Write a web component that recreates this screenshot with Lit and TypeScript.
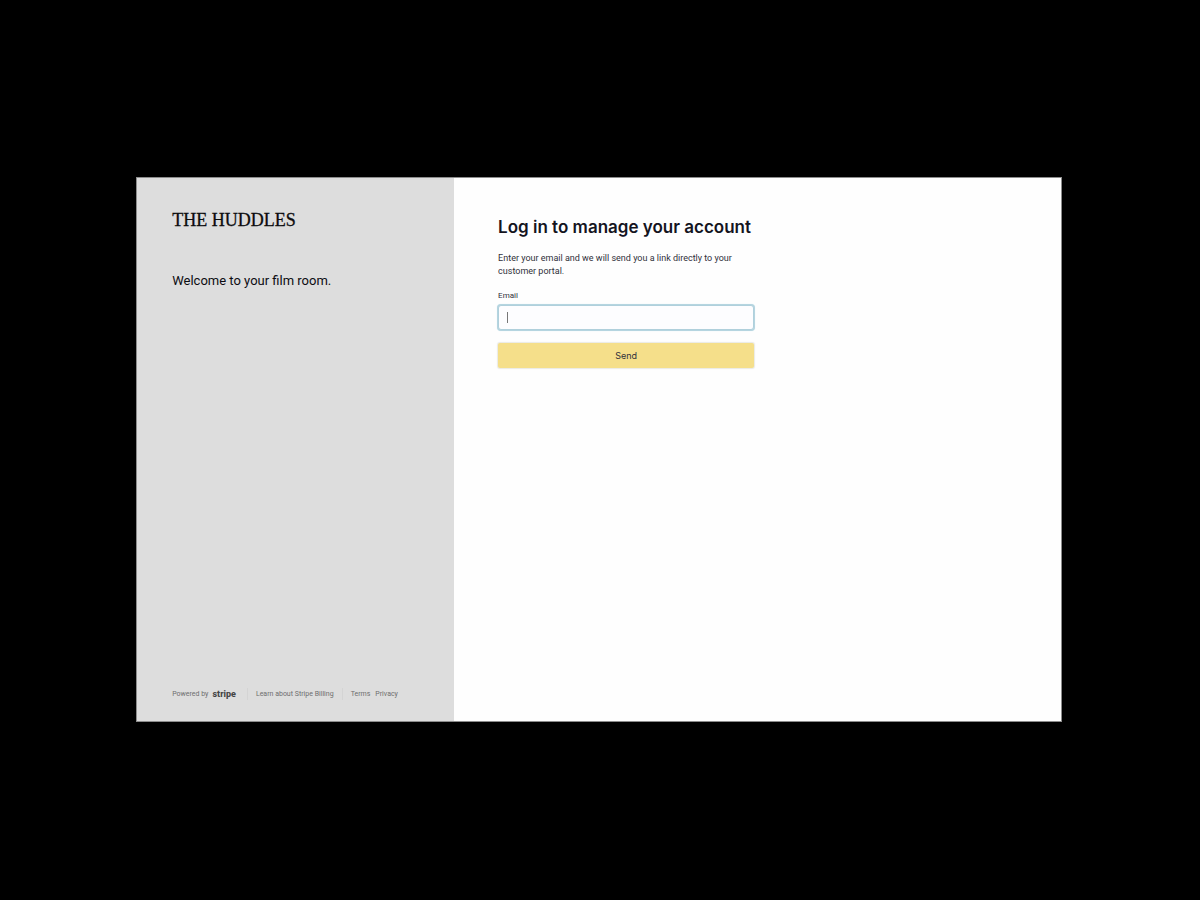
import { LitElement, html, css } from "lit";
import { customElement } from "lit/decorators.js";

@customElement("app-root")
export class AppRoot extends LitElement {
  static styles = css`
    :host {
      display: flex;
      box-sizing: border-box;
      min-height: 100vh;
      padding: 177px 11.5% 178px 11.35%;
      background: #000;
      color: #1a1a24;
      font-family: Roboto, "Liberation Sans", sans-serif;
      font-size: 9px;
    }
    * {
      box-sizing: border-box;
    }
    .portal {
      flex: 1;
      display: grid;
      grid-template-columns: 317fr 607fr;
      background: #fefefe;
      border: 1px solid #8c8c8c;
    }
    .brand {
      display: flex;
      flex-direction: column;
      padding: 30px 35px 21px;
      background: #dddddd;
    }
    .name {
      margin: 0;
      font: 500 18px/24px "Liberation Serif", serif;
      color: #0c0c0e;
      -webkit-text-stroke: 0.3px #0c0c0e;
    }
    .welcome {
      margin: 40px 0 0;
      font-size: 13px;
      line-height: 18px;
      color: #0c0c12;
    }
    .footer {
      display: flex;
      align-items: center;
      margin-top: auto;
      font-size: 7px;
      line-height: 12px;
      color: #6e6e6e;
      white-space: nowrap;
    }
    .footer a {
      color: inherit;
      text-decoration: none;
    }
    .footer .powered {
      display: flex;
      align-items: center;
      gap: 4px;
      padding-right: 11px;
    }
    .stripe {
      font-size: 9px;
      font-weight: 800;
      color: #444;
    }
    .footer .learn {
      padding: 0 8px;
      border: solid #d4d4d4;
      border-width: 0 1px;
    }
    .legal {
      display: flex;
      gap: 5px;
      padding-left: 8px;
    }
    .login {
      padding: 37px 44px;
    }
    form {
      display: flex;
      flex-direction: column;
      max-width: 256px;
    }
    h1 {
      margin: 0;
      font: 600 17px/24px Inter, "Liberation Sans", sans-serif;
      white-space: nowrap;
      color: #14141e;
    }
    .intro {
      margin: 13px 0 12px;
      line-height: 13px;
      color: #30303a;
    }
    label {
      font-size: 8px;
      line-height: 12px;
      color: #30303a;
    }
    input {
      width: 100%;
      height: 25px;
      margin: 3px 0 13px;
      padding: 0 9px;
      border: 1px solid #b0d0dc;
      border-radius: 3px;
      outline: 0;
      background: linear-gradient(#777, #777) 8px center / 1px 11px no-repeat #fdfdff;
      box-shadow: 0 0 0 1px #b5d5e0, 0 0 1px 1px #cfe6ee;
      font: inherit;
      caret-color: transparent;
    }
    button {
      height: 25px;
      padding: 0;
      border: 0;
      border-radius: 2px;
      background: #f5df8a;
      box-shadow: 0 0 1px 1px rgba(90, 80, 30, 0.12);
      color: #30303a;
      font: 400 9px/12px Inter, "Liberation Sans", sans-serif;
    }
  `;

  render() {
    return html`
      <main class="portal">
        <section class="brand">
          <p class="name">THE HUDDLES</p>
          <p class="welcome">Welcome to your film room.</p>
          <footer class="footer">
            <a class="powered" href="#">Powered by <span class="stripe">stripe</span></a>
            <a class="learn" href="#">Learn about Stripe Billing</a>
            <nav class="legal"><a href="#">Terms</a><a href="#">Privacy</a></nav>
          </footer>
        </section>
        <section class="login">
          <form @submit=${(e: Event) => e.preventDefault()}>
            <h1>Log in to manage your account</h1>
            <p class="intro">
              Enter your email and we will send you a link directly to your customer portal.
            </p>
            <label for="email">Email</label>
            <input id="email" type="email" autocomplete="email" />
            <button type="submit">Send</button>
          </form>
        </section>
      </main>
    `;
  }
}
